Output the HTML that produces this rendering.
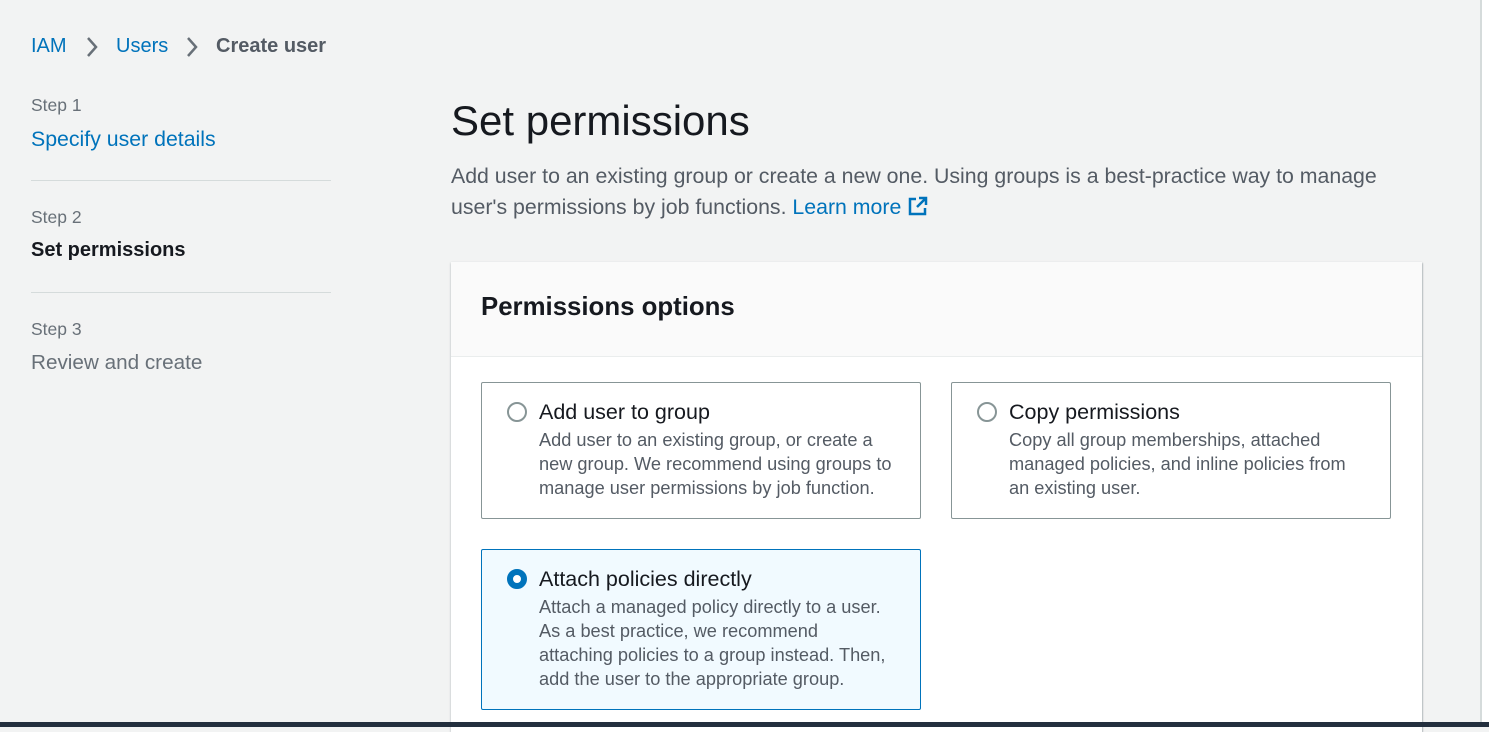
<!DOCTYPE html>
<html><head><style>
*{margin:0;padding:0;box-sizing:border-box}
body{width:1489px;height:727px;overflow:hidden;background:#f2f3f3;font-family:"Liberation Sans",sans-serif;position:relative;color:#16191f}
.a{position:absolute;white-space:nowrap}
.blue{color:#0073bb}
.gray{color:#687078}
.hr{position:absolute;left:31px;width:300px;height:1px;background:#d5dbdb}
.card{position:absolute;left:451px;top:262px;width:971px;height:470px;background:#fff;box-shadow:0 1px 2px rgba(0,28,36,.3),1px 1px 1px rgba(0,28,36,.15)}
.head{position:absolute;left:0;top:0;width:100%;height:95px;background:#fafafa;border-bottom:1px solid #eaeded}
.opt{position:absolute;width:440px;height:137px;border:1px solid #879596;border-radius:2px;background:#fff}
.opt.sel{border-color:#0073bb;background:#f1faff;height:161px}
.rad{position:absolute;left:25px;top:19px;width:20px;height:20px;border:2px solid #879596;border-radius:50%;background:#fff}
.sel .rad{border:6px solid #0073bb}
.ot{position:absolute;left:57px;top:17px;font-size:21.5px;color:#16191f}
.od{position:absolute;left:57px;top:45px;font-size:18.2px;line-height:24px;color:#545b64;white-space:nowrap}
</style></head><body>
<div class="a" style="left:31px;top:35px;font-size:20px;"><span class="blue">IAM</span></div>
<svg class="a" style="left:84px;top:35px" width="16" height="24"><path d="M4 3l8 9-8 9" fill="none" stroke="#687078" stroke-width="2.5"/></svg>
<div class="a blue" style="left:116px;top:35px;font-size:20px">Users</div>
<svg class="a" style="left:184px;top:35px" width="16" height="24"><path d="M4 3l8 9-8 9" fill="none" stroke="#687078" stroke-width="2.5"/></svg>
<div class="a" style="left:216px;top:35px;font-size:20px;font-weight:bold;color:#545b64">Create user</div>

<div class="a gray" style="left:31px;top:95px;font-size:17.5px">Step 1</div>
<div class="a blue" style="left:31px;top:127px;font-size:21.3px">Specify user details</div>
<div class="hr" style="top:180px"></div>
<div class="a gray" style="left:31px;top:207px;font-size:17.5px">Step 2</div>
<div class="a" style="left:31px;top:239px;font-size:20px;font-weight:bold">Set permissions</div>
<div class="hr" style="top:292px"></div>
<div class="a gray" style="left:31px;top:319px;font-size:17.5px">Step 3</div>
<div class="a gray" style="left:31px;top:351px;font-size:20.7px">Review and create</div>

<div class="a" style="left:451px;top:97px;font-size:42px">Set permissions</div>
<div class="a" style="left:451px;top:161px;font-size:21.3px;line-height:31px;color:#545b64">Add user to an existing group or create a new one. Using groups is a best-practice way to manage<br>user's permissions by job functions. <span class="blue">Learn more</span> <svg width="22" height="20" style="vertical-align:-2px"><path d="M9 3H3v15h15v-6" fill="none" stroke="#0073bb" stroke-width="2.5"/><path d="M12 2h7v7M19 2l-9 9" fill="none" stroke="#0073bb" stroke-width="2.5"/></svg></div>

<div class="card">
<div class="head"><div class="a" style="left:30px;top:31px;font-size:25.8px;font-weight:bold">Permissions options</div></div>
<div class="opt" style="left:30px;top:120px"><div class="rad"></div><div class="ot">Add user to group</div><div class="od">Add user to an existing group, or create a<br>new group. We recommend using groups to<br>manage user permissions by job function.</div></div>
<div class="opt" style="left:500px;top:120px"><div class="rad"></div><div class="ot">Copy permissions</div><div class="od">Copy all group memberships, attached<br>managed policies, and inline policies from<br>an existing user.</div></div>
<div class="opt sel" style="left:30px;top:287px"><div class="rad"></div><div class="ot">Attach policies directly</div><div class="od">Attach a managed policy directly to a user.<br>As a best practice, we recommend<br>attaching policies to a group instead. Then,<br>add the user to the appropriate group.</div></div>
</div>
<div class="a" style="left:1480px;top:0;width:2px;height:727px;background:#d5dbdb"></div>
<div class="a" style="left:1482px;top:0;width:7px;height:727px;background:#fff"></div>
<div class="a" style="left:0;top:722px;width:1489px;height:5px;background:#232f3e"></div>
</body></html>
